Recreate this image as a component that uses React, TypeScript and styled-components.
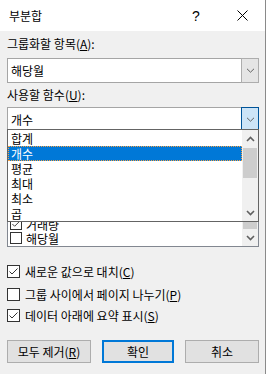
import React from 'react';
import styled, { createGlobalStyle } from 'styled-components';

const GlobalStyle = createGlobalStyle`
    html, body {
        margin: 0;
        padding: 0;
        background: #ffffff;
    }
    * {
        box-sizing: border-box;
    }
    body {
        font-family: "Noto Sans CJK KR", "Noto Sans", sans-serif;
        font-size: 12px;
        line-height: 16px;
        color: #000000;
    }
`

const Window = styled.div`
    width: 266px;
    height: 374px;
    border-right: 1px solid #8a8a8a;
    display: flex;
    flex-direction: column;
    background: #f0f0f0;
`

const TitleBar = styled.div`
    height: 31px;
    flex-shrink: 0;
    background: #ffffff;
    display: flex;
    align-items: center;
    .title{
        flex: 1;
        padding-left: 9px;
        font-size: 12px;
    }
`

const CaptionButton = styled.div`
    width: 46px;
    height: 31px;
    display: flex;
    align-items: center;
    justify-content: center;
    font-family: "Liberation Sans", sans-serif;
    font-size: 14px;
    color: #000;
`

const Body = styled.div`
    flex: 1;
    padding: 5px 6px 0 7px;
    display: flex;
    flex-direction: column;
`

const FieldLabel = styled.div<{ $top: number }>`
    height: 16px;
    margin-top: ${(props) => props.$top}px;
    white-space: nowrap;
`

const Key = styled.span`
    text-decoration: underline;
    text-underline-offset: 1px;
`

const Combo = styled.div<{ $top: number }>`
    position: relative;
    height: 25px;
    margin-top: ${(props) => props.$top}px;
    border: 1px solid #a5a5a5;
    background: #ffffff;
    display: flex;
    align-items: stretch;
    .value{
        flex: 1;
        padding-left: 3px;
        display: flex;
        align-items: center;
    }
`

const ComboButton = styled.div<{ $focused?: boolean }>`
    width: 18px;
    margin: -1px -1px -1px 0;
    border: 1px solid ${(props) => props.$focused ? '#005499' : '#adadad'};
    background: ${(props) => props.$focused ? '#cce4f7' : '#e5e5e5'};
    display: flex;
    align-items: center;
    justify-content: center;
`

const DropList = styled.div`
    position: absolute;
    left: -1px;
    top: 21px;
    width: 252px;
    height: 93px;
    border: 1px solid #646464;
    background: #ffffff;
    display: flex;
    z-index: 2;
`

const Items = styled.div<{ $bottom?: boolean }>`
    flex: 1;
    display: flex;
    flex-direction: column;
    overflow: hidden;
    justify-content: ${(props) => props.$bottom ? 'flex-end' : 'flex-start'};
    padding: ${(props) => props.$bottom ? '0 0 1px 0' : '1px 0 0 0'};
`

const DropItem = styled.div<{ $selected?: boolean }>`
    height: 15px;
    flex-shrink: 0;
    padding-left: 2px;
    line-height: 13px;
    white-space: nowrap;
    background: ${(props) => props.$selected ? '#0078d7' : 'transparent'};
    color: ${(props) => props.$selected ? '#ffffff' : '#000000'};
    border: 1px ${(props) => props.$selected ? 'dotted #f5a043' : 'solid transparent'};
`

const ScrollBar = styled.div`
    width: 16px;
    background: #f0f0f0;
    display: flex;
    flex-direction: column;
`

const ScrollArrow = styled.div`
    height: 17px;
    flex-shrink: 0;
    display: flex;
    align-items: center;
    justify-content: center;
`

const ScrollTrack = styled.div<{ $end?: boolean }>`
    flex: 1;
    display: flex;
    flex-direction: column;
    justify-content: ${(props) => props.$end ? 'flex-end' : 'flex-start'};
    padding: 1px 1px 0 1px;
`

const ScrollThumb = styled.div<{ $height: number }>`
    height: ${(props) => props.$height}px;
    background: #cdcdcd;
`

const ListBox = styled.div`
    height: 91px;
    margin-top: 24px;
    border: 1px solid #828790;
    background: #ffffff;
    display: flex;
`

const ListRow = styled.div`
    height: 14px;
    flex-shrink: 0;
    display: flex;
    align-items: center;
    padding-left: 2px;
    gap: 4px;
    white-space: nowrap;
    line-height: 13px;
`

const Box = styled.div<{ $size: number }>`
    width: ${(props) => props.$size}px;
    height: ${(props) => props.$size}px;
    flex-shrink: 0;
    border: 1px solid #333333;
    background: #ffffff;
    display: flex;
    align-items: center;
    justify-content: center;
`

const CheckRow = styled.div<{ $top: number }>`
    height: 13px;
    margin-top: ${(props) => props.$top}px;
    display: flex;
    align-items: center;
    gap: 5px;
    white-space: nowrap;
`

const ButtonRow = styled.div`
    margin-top: 18px;
    display: flex;
    gap: 11px;
`

const DialogButton = styled.div<{ $width: number; $default?: boolean }>`
    width: ${(props) => props.$width}px;
    height: 23px;
    border: ${(props) => props.$default ? '2px solid #0078d7' : '1px solid #adadad'};
    background: #e1e1e1;
    display: flex;
    align-items: center;
    justify-content: center;
    white-space: nowrap;
`

const Chevron = ({ up }: { up?: boolean }) => (
    <svg width="9" height="6" viewBox="0 0 9 6">
        <path d={up ? 'M1 5 L4.5 1.5 L8 5' : 'M1 1 L4.5 4.5 L8 1'} fill="none" stroke="#606060" strokeWidth="1.6" />
    </svg>
)

const ComboChevron = () => (
    <svg width="9" height="5" viewBox="0 0 9 5">
        <path d="M1 0.8 L4.5 4.2 L8 0.8" fill="none" stroke="#606060" strokeWidth="1" />
    </svg>
)

const CheckMark = ({ size }: { size: number }) => (
    <svg width={size - 2} height={size - 2} viewBox="0 0 11 11">
        <path d="M1.5 5.5 L4 8 L9.5 2.5" fill="none" stroke="#333333" strokeWidth="1" />
    </svg>
)

const Checkbox = ({ checked, size }: { checked?: boolean; size: number }) => (
    <Box $size={size}>{checked && <CheckMark size={size} />}</Box>
)

const functions = ['합계', '개수', '평균', '최대', '최소', '곱']
// only the rows left visible under the open dropdown
const columns = [
    { name: '거래량', checked: true },
    { name: '해당월', checked: false },
]

const App = () => {
    return (
        <Window>
            <GlobalStyle />
            <TitleBar>
                <span className="title">부분합</span>
                <CaptionButton>?</CaptionButton>
                <CaptionButton>
                    <svg width="11" height="11" viewBox="0 0 11 11">
                        <path d="M0.5 0.5 L10.5 10.5 M10.5 0.5 L0.5 10.5" stroke="#000" strokeWidth="1" />
                    </svg>
                </CaptionButton>
            </TitleBar>
            <Body>
                <FieldLabel $top={0}>그룹화할 항목(<Key>A</Key>):</FieldLabel>
                <Combo $top={6}>
                    <span className="value">해당월</span>
                    <ComboButton><ComboChevron /></ComboButton>
                </Combo>
                <FieldLabel $top={4}>사용할 함수(<Key>U</Key>):</FieldLabel>
                <Combo $top={4}>
                    <span className="value">개수</span>
                    <ComboButton $focused><ComboChevron /></ComboButton>
                    <DropList>
                        <Items>
                            {functions.map((f) => (
                                <DropItem key={f} $selected={f === '개수'}>{f}</DropItem>
                            ))}
                        </Items>
                        <ScrollBar>
                            <ScrollArrow><Chevron up /></ScrollArrow>
                            <ScrollTrack><ScrollThumb $height={30} /></ScrollTrack>
                            <ScrollArrow><Chevron /></ScrollArrow>
                        </ScrollBar>
                    </DropList>
                </Combo>
                <ListBox>
                    <Items $bottom>
                        {columns.map((c) => (
                            <ListRow key={c.name}>
                                <Checkbox size={12} checked={c.checked} />
                                <span>{c.name}</span>
                            </ListRow>
                        ))}
                    </Items>
                    <ScrollBar>
                        <ScrollArrow><Chevron up /></ScrollArrow>
                        <ScrollTrack $end><ScrollThumb $height={40} /></ScrollTrack>
                        <ScrollArrow><Chevron /></ScrollArrow>
                    </ScrollBar>
                </ListBox>
                <CheckRow $top={18}>
                    <Checkbox size={13} checked />
                    <span>새로운 값으로 대치(<Key>C</Key>)</span>
                </CheckRow>
                <CheckRow $top={10}>
                    <Checkbox size={13} />
                    <span>그룹 사이에서 페이지 나누기(<Key>P</Key>)</span>
                </CheckRow>
                <CheckRow $top={8}>
                    <Checkbox size={13} checked />
                    <span>데이터 아래에 요약 표시(<Key>S</Key>)</span>
                </CheckRow>
                <ButtonRow>
                    <DialogButton $width={84}>모두 제거(<Key>R</Key>)</DialogButton>
                    <DialogButton $width={72} $default>확인</DialogButton>
                    <DialogButton $width={74}>취소</DialogButton>
                </ButtonRow>
            </Body>
        </Window>
    )
}

export default App
